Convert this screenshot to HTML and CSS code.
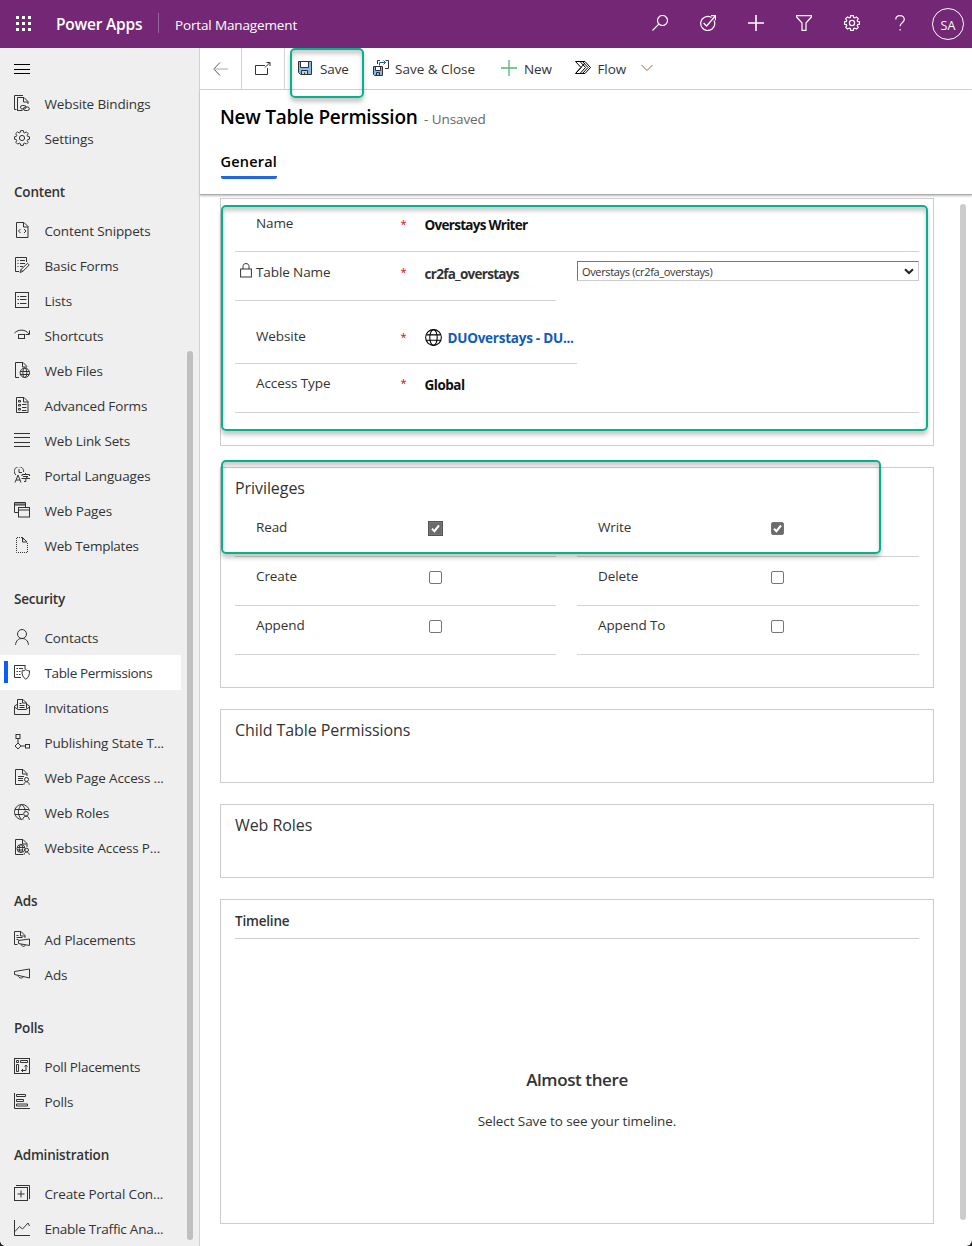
FILE: index.html
```html
<!DOCTYPE html>
<html lang="en">
<head>
<meta charset="utf-8">
<title>New Table Permission</title>
<link rel="stylesheet" href="styles.css">
</head>
<body>
<div class="app">
  <header class="topbar">
    <svg class="waffle" viewBox="0 0 16 16"><path d="M0 0h3v3H0zM6 0h3v3H6zM12 0h3v3h-3zM0 6h3v3H0zM6 6h3v3H6zM12 6h3v3h-3zM0 12h3v3H0zM6 12h3v3H6zM12 12h3v3h-3z"/></svg>
    <span class="brand">Power Apps</span>
    <span class="brand-sep"></span>
    <span class="app-name">Portal Management</span>
    <nav class="top-actions">
      <svg class="ti" viewBox="0 0 16 16"><circle cx="10.5" cy="5.5" r="5"/><path d="M6.8 9.2.5 15.5"/></svg>
      <svg class="ti" viewBox="0 0 16 16"><path d="M11.5 2.6A7 7 0 1 0 14 5.4M3.6 8l3 3L15.3 1M11 .6h4.5v4.6"/></svg>
      <svg class="ti plus" viewBox="0 0 16 16"><path d="M8 0v16M0 8h16"/></svg>
      <svg class="ti" viewBox="0 0 16 16"><path d="M.6.7h14.8v1.2L10 8v7.4H6V8L.6 1.9z"/></svg>
      <svg class="ti" viewBox="0 0 16 16"><path d="m6.6.6-.4 1.9-1 .4-1.7-1-1.8 1.8 1 1.7-.4 1-1.8.4v2.4l1.9.4.4 1-1 1.7 1.8 1.8 1.7-1 1 .4.4 1.9h2.6l.4-1.9 1-.4 1.7 1 1.8-1.8-1-1.7.4-1 1.9-.4V6.8l-1.9-.4-.4-1 1-1.7-1.8-1.8-1.7 1-1-.4L9.3.6z"/><circle cx="8" cy="8" r="2.6"/></svg>
      <svg class="ti" viewBox="0 0 16 16"><path d="M3.8 4.5C3.8 2 5.5.6 8 .6s4.300 1.400 4.300 3.800c0 3.100-4.200 3.600-4.200 6.800M8.100 14v1.600"/></svg>
      <span class="avatar">SA</span>
    </nav>
  </header>

  <div class="body">
    <aside class="sidebar">
      <div class="menu"><svg class="ni burger" viewBox="0 0 16 16"><path d="M0 3.500h16M0 8.500h16M0 12.500h16"/></svg></div>
      <a class="item"><svg class="ni" viewBox="0 0 16 16"><path d="M2.500 14.500h-2V.5H9M3.500 15.500h5M5 15.500H3.500v-13H10l4 4v2.500M9.500 2.500V7H14"/><rect x="6.500" y="10.500" width="5.500" height="3.500" rx="1.700"/><rect x="9.500" y="12" width="5.800" height="3.500" rx="1.700"/></svg>Website Bindings</a>
      <a class="item"><svg class="ni" viewBox="0 0 16 16"><path d="m6.600.6-.4 1.900-1 .4-1.700-1-1.800 1.800 1 1.700-.4 1-1.800.4v2.400l1.900.4.4 1-1 1.700 1.800 1.800 1.700-1 1 .4.4 1.900h2.600l.4-1.900 1-.4 1.700 1 1.800-1.800-1-1.700.4-1 1.900-.4V6.800l-1.900-.4-.4-1 1-1.700-1.800-1.800-1.700 1-1-.4L9.300.6z"/><circle cx="8" cy="8" r="2.600"/></svg>Settings</a>

      <h2 class="group">Content</h2>
      <a class="item"><svg class="ni" viewBox="0 0 16 16"><path d="M2.500.5H10l4 4v11H2.500zM9.500.5V5H14M6.500 7l-2 2 2 2M10 7l2 2-2 2"/></svg>Content Snippets</a>
      <a class="item"><svg class="ni" viewBox="0 0 16 16"><path d="M5 14.500H1.500V.5h11V5M3.500 3.500h1M6 3.500h5M3.500 6.500h1M6 6.500h5M3.500 9.500h1M6 9.500h3"/><path d="m6 15.500 1-3 6.500-6.200 1.700 1.700-6.400 6.400zM7 12.500l1.800 1.800"/></svg>Basic Forms</a>
      <a class="item"><svg class="ni" viewBox="0 0 16 16"><rect x="1.500" y=".5" width="13" height="15"/><path d="M3.500 4.500H5M6 4.500h6.500M3.500 7.500H5M6 7.500h6.500M3.500 11.500H5M6 11.500h6.500"/></svg>Lists</a>
      <a class="item"><svg class="ni" viewBox="0 0 16 16"><path d="M.5 6c4-4 11-4 14.500 1M15.500 3.500v4h-4"/><rect x="4.500" y="7.500" width="6" height="4"/></svg>Shortcuts</a>
      <a class="item"><svg class="ni" viewBox="0 0 16 16"><path d="M5 15.500H1.500V.5H9l4 4M8.500.5V5H13"/><circle cx="10.800" cy="10.800" r="4.700"/><ellipse cx="10.800" cy="10.800" rx="2" ry="4.700"/><path d="M6.200 9.500h9M6.200 12.500h9"/></svg>Web Files</a>
      <a class="item"><svg class="ni" viewBox="0 0 16 16"><path d="M2.500.5H10l4 4v11H2.500zM9.500.5V5H14M8 7.500h4.500M8 10.500h4.500M8 13.500h4.500"/><path d="M4.500 3.500h2v1.500h-2zM4.500 7.500h2v1.500h-2zM4.500 11.500h2V13h-2z"/></svg>Advanced Forms</a>
      <a class="item"><svg class="ni" viewBox="0 0 16 16"><path d="M0 1.500h16M0 5.500h16M0 10.500h16M0 14.500h16"/></svg>Web Link Sets</a>
      <a class="item"><svg class="ni" viewBox="0 0 16 16"><path d="M2 8A4.700 4.700 0 1 1 9.600 5M5 2v3.500h3M1 15.500l3-7.500 3 7.500M2 13h4M8 9V7.500h7.500V9M11.500 6v1.500M9 9.500h5l-2.200 1.800v3.200H10M7.500 11.500H16"/></svg>Portal Languages</a>
      <a class="item"><svg class="ni" viewBox="0 0 16 16"><path d="M4 10.500H.5V.5h11V5M.5 2h11M.5 3h11"/><rect x="4.500" y="5.500" width="11" height="9.500"/><path d="M4.500 8h11"/></svg>Web Pages</a>
      <a class="item tight"><svg class="ni" viewBox="0 0 16 16"><path stroke-dasharray="1 1" d="M8 .5H2.500v15h11V6"/><path d="M8.500.5V5H13L8.500.5l2 2.500"/></svg>Web Templates</a>

      <h2 class="group">Security</h2>
      <a class="item"><svg class="ni" viewBox="0 0 16 16"><circle cx="8" cy="5" r="4.500"/><path d="M1.500 15.800C2 11.500 4.500 9.500 8 9.500s6 2 6.500 6.300"/></svg>Contacts</a>
      <a class="item selected"><svg class="ni" viewBox="0 0 16 16"><path d="M7 13.500H.5V1.500H11V5M2.500 4.500H4M5 4.500h4M2.500 7.500H4M5 7.500h1.500M2.500 10.500H4M5 10.500h1.500M.5 1.500h11"/><path d="M11.800 5.500c1 1 2.300 1.300 3.700 1.300 0 4-.7 6.700-3.700 8.400-3-1.700-3.800-4.400-3.800-8.400 1.500 0 2.800-.3 3.800-1.300z"/></svg>Table Permissions</a>
      <a class="item"><svg class="ni" viewBox="0 0 16 16"><path d="M3 5.500.5 7v8.500h15V7L13 5.500M.5 8 4 10.500h8L15.500 8M3.500 9.500v-9H9l3.500 3.500v5.500M8.500.5V4h4M5.500 4.500h2M5.500 6.500h5M5.500 8.500h5"/></svg>Invitations</a>
      <a class="item"><svg class="ni" viewBox="0 0 16 16"><rect x="2" y=".5" width="4" height="4"/><path d="M4 4.500V9M6.500 12h5M4 9l3 3-3 3-3-3z"/><rect x="11.500" y="10.500" width="4" height="3.500"/></svg>Publishing State T...</a>
      <a class="item"><svg class="ni" viewBox="0 0 16 16"><path d="M9 15.500H1.500V.5H9l4 4V7M8.500.5V5H13M4 7.500h6M4 9.500h5M4 11.500h5"/><circle cx="12.500" cy="10.500" r="2"/><path d="M9.800 15.800c.2-4 5.200-4 5.500 0"/></svg>Web Page Access ...</a>
      <a class="item"><svg class="ni" viewBox="0 0 16 16"><path d="M8 15.500A7.500 7.500 0 1 1 15.400 7M7 15c-4-5-3-11 .5-14.300M8 .7c2 1.700 3 4 3.200 6M1 5.500h14M1 10.500h8"/><circle cx="12" cy="9.800" r="2.300"/><path d="M8.800 15.800c.2-4.800 6.300-4.800 6.500 0"/></svg>Web Roles</a>
      <a class="item"><svg class="ni" viewBox="0 0 16 16"><path d="M9 15.500H1.500V.5H9l4 4V8M8.500.5V5H13"/><circle cx="7" cy="9.500" r="4"/><ellipse cx="7" cy="9.500" rx="1.700" ry="4"/><path d="M3 8.500h8M3 11h6"/><circle cx="12.700" cy="11" r="1.800"/><path d="M10 15.800c.2-3.600 5-3.600 5.300 0"/></svg>Website Access P...</a>

      <h2 class="group">Ads</h2>
      <a class="item"><svg class="ni" viewBox="0 0 16 16"><path d="M3.500 13.500h-3V.5H7l4 4V7M6.500.5V5H11M2.500 4.500h2M2.500 6.500h6M2.500 8.500h2"/><path d="M4.500 9.500 15.500 8v6.500L4.500 12.500zM7 13c.5 3 4 3 4.500.8"/></svg>Ad Placements</a>
      <a class="item"><svg class="ni" viewBox="0 0 16 16"><path d="M.5 5.500 15.500 3v9L.5 8.500zM4 9.500c.5 3.200 5 3.200 5.500 1"/></svg>Ads</a>

      <h2 class="group">Polls</h2>
      <a class="item tight"><svg class="ni" viewBox="0 0 16 16"><rect x=".5" y=".5" width="15" height="15"/><path d="M2.500 2.500h2V4.500h-2zM6.500 2.500h7V4.500h-7zM2.500 6.500h2v7h-2zM12 7v5.500H7.500M10.500 8.500 12 7l1.500 1.500M9 11l-1.500 1.500L9 14"/></svg>Poll Placements</a>
      <a class="item"><svg class="ni" viewBox="0 0 16 16"><path d="M.5 0v15.500H16M2.500 1.500h9v2h-9zM2.500 6.500h7v2h-7zM2.500 11h11v2h-11z"/></svg>Polls</a>

      <h2 class="group">Administration</h2>
      <a class="item"><svg class="ni" viewBox="0 0 16 16"><rect x=".5" y="2.500" width="13" height="13"/><path d="M2 .5h13.500V14M7 5.500v7M3.500 9h7"/></svg>Create Portal Con...</a>
      <a class="item tight"><svg class="ni" viewBox="0 0 16 16"><path d="M.5 0v15.500H16M1 11.500l4.500-5 3 2.500L14 3l1.500 3"/></svg>Enable Traffic Ana...</a>
      <div class="side-scroll"></div>
    </aside>

    <main class="main">
      <div class="commands">
        <span class="cmd-icon back"><svg class="ci" viewBox="0 0 16 16"><path d="M7 1.500.8 8 7 14.500"/><path class="shaft" d="M1 8h14"/></svg></span>
        <span class="cmd-icon pop"><svg class="ci" viewBox="0 0 16 16"><path d="M10 4.500H.5v9h12V7M10 6.500l5-5M11.500 1.500H15V5"/></svg></span>
        <span class="cmd save"><svg class="ci" viewBox="0 0 16 16"><path fill="#83bce9" stroke="none" d="M1 1h13v13H3l-2-2z"/><path fill="#fff" class="dk" d="M3.500 1.500h8v6h-8z"/><path fill="#d0d0d0" class="dk" d="M4.500 10.500h6v4h-6zM7.500 12.500v2"/><path class="dk" d="M1.500 1.500h13v13h-11l-2-2z"/></svg>Save</span>
        <span class="cmd saveclose"><svg class="ci" viewBox="0 0 16 16"><path fill="#83bce9" stroke="none" d="M1 7h9v8H1z"/><path fill="#fff" stroke="none" d="M3 7h5v3H3z"/><path class="dk" d="M.5 6.500h9v9h-8l-1-1zM2.500 6.500v4h5v-4M3.500 15.500v-3h3v3M4.500 4V.5H7M12.500.5h3v8H12"/><path class="bl" d="M6.500 5.500v-3h6M10.500.5l2 2-2 2"/></svg>Save &amp; Close</span>
        <span class="cmd new"><svg class="ci green" viewBox="0 0 16 16"><path d="M8 0v16M0 8h16"/></svg>New</span>
        <span class="cmd flow"><svg class="ci blk" viewBox="0 0 16 16"><path d="M.5 1.500h9.500L15.500 7.500 10 13.500H.5L6 7.500zM5 1.500l5.500 6M10.500 7.500l-5.500 6M1 13 10 3M7.500 1.500l5.500 6-5.500 6"/></svg>Flow</span>
        <svg class="chev" viewBox="0 0 12 8"><path d="M.5 1 6 6.500 11.500 1"/></svg>
        <div class="mark mark-save"></div>
      </div>
      <div class="head">
        <div class="title-row"><h1>New Table Permission</h1><span class="unsaved">- Unsaved</span></div>
        <span class="tab">General</span>
      </div>

      <div class="content">
        <section class="card first">
          <div class="row r-name"><span class="label">Name</span><span class="req">*</span><span class="val">Overstays Writer</span></div>
          <div class="pair">
            <div class="row r-table"><svg class="lock" viewBox="0 0 12 15"><rect x=".6" y="6" width="10.800" height="8"/><path d="M3 6V3.500C3 1.500 4.200.6 6 .6s3 .9 3 2.900V6"/></svg><span class="label">Table Name</span><span class="req">*</span><span class="val soft">cr2fa_overstays</span></div>
            <div class="select"><span>Overstays (cr2fa_overstays)</span><svg viewBox="0 0 10 7"><path d="M1 1.200 5 5 9 1.200"/></svg></div>
          </div>
          <div class="row r-site"><span class="label">Website</span><span class="req">*</span><span class="val link"><svg viewBox="0 0 16 16"><circle cx="8" cy="8" r="7.400"/><ellipse cx="8" cy="8" rx="3.500" ry="7.400"/><path d="M1.200 5.500h13.600M1.200 10.500h13.600"/></svg>DUOverstays - DU...</span></div>
          <div class="row r-access"><span class="label">Access Type</span><span class="req">*</span><span class="val">Global</span></div>
          <div class="mark mark-form"></div>
        </section>

        <section class="card privileges">
          <h3>Privileges</h3>
          <div class="grid">
            <div class="row"><span class="label">Read</span><span class="check on focus"><svg viewBox="0 0 13 13"><path d="m3 6.800 2.400 2.400L10 3.500"/></svg></span></div>
            <div class="row"><span class="label">Write</span><span class="check on"><svg viewBox="0 0 13 13"><path d="m3 6.800 2.400 2.400L10 3.500"/></svg></span></div>
            <div class="row"><span class="label">Create</span><span class="check"></span></div>
            <div class="row"><span class="label">Delete</span><span class="check"></span></div>
            <div class="row"><span class="label">Append</span><span class="check"></span></div>
            <div class="row"><span class="label">Append To</span><span class="check"></span></div>
          </div>
          <div class="mark mark-priv"></div>
        </section>

        <section class="card short"><h3>Child Table Permissions</h3></section>
        <section class="card short"><h3>Web Roles</h3></section>

        <section class="card timeline">
          <h4>Timeline</h4>
          <div class="almost">Almost there</div>
          <p>Select Save to see your timeline.</p>
        </section>
        <div class="main-scroll"></div>
      </div>
    </main>
  </div>
</div>
</body>
</html>
```
FILE: styles.css
```css
* { box-sizing: border-box; }
body { margin: 0; background: #222; font-family: "Open Sans", "Noto Sans", sans-serif; font-size: 13.5px; color: #333; }
h1, h2, h3, h4, p { margin: 0; }
svg { display: block; flex: none; fill: none; stroke: currentColor; stroke-width: 1; }
.app { width: 972px; height: 1246px; overflow: hidden; background: #fff; border-radius: 0 0 6px 6px; display: flex; flex-direction: column; }

.topbar { height: 48px; flex: none; background: #742774; color: #fff; display: flex; align-items: center; padding-left: 16px; white-space: nowrap; }
.waffle { width: 16px; height: 16px; fill: #fff; stroke: none; }
.brand { width: 102px; margin-left: 24px; font-size: 15.5px; font-weight: 600; letter-spacing: -.2px; }
.brand-sep { width: 1px; height: 20px; margin-top: -2px; background: #9a629a; }
.app-name { margin: 2px 0 0 16px; letter-spacing: -.14px; }
.top-actions { margin-left: auto; display: flex; align-items: center; gap: 32px; padding-right: 8px; }
.ti { width: 16px; height: 16px; stroke-width: 1.2; margin-top: -3px; }
.plus { stroke-width: 1.6; }
.avatar { width: 32px; height: 32px; margin-left: -8px; border: 1px solid #fff; border-radius: 50%; text-align: center; font-size: 12.5px; line-height: 33px; }

.body { flex: 1; display: flex; min-height: 0; }
.sidebar { position: relative; width: 200px; flex: none; background: #efefef; border-right: 1px solid #d2d2d2; }
.menu { height: 38px; padding: 13px 0 0 14px; }
.burger { color: #000; }
.ni { width: 16px; height: 16px; margin-right: 14.5px; }
.item { display: flex; align-items: center; height: 35px; width: 181px; padding-left: 14px; letter-spacing: -.14px; white-space: nowrap; }
.item .ni { margin-top: -1px; }
.tight { letter-spacing: -.24px; }
.selected { letter-spacing: -.36px; background: linear-gradient(#0b5cff, #0b5cff) 4px 6px / 4px 22px no-repeat #fff; }
.group { height: 57px; padding: 26px 0 0 14px; font-size: 13.5px; line-height: 20px; font-weight: 600; letter-spacing: -.2px; }
.side-scroll { position: absolute; left: 187px; top: 303px; width: 6px; height: 889px; border-radius: 3px; background: #bfbfbf; }

.main { flex: 1; display: flex; flex-direction: column; min-width: 0; }
.commands { position: relative; height: 42px; flex: none; border-bottom: 1px solid #d2d2d2; display: flex; align-items: center; white-space: nowrap; }
.cmd-icon { height: 41px; display: flex; align-items: center; border-right: 1px solid #d2d2d2; }
.back { width: 42px; padding-left: 13px; }
.pop { width: 43px; padding-left: 13px; }
.ci { width: 16px; height: 16px; }
.back .ci { stroke: #555; }
.back .shaft { stroke: #aaa; }
.cmd { display: flex; align-items: center; gap: 7px; letter-spacing: -.1px; }
.cmd .ci { margin-top: -2px; }
.dk { stroke: #333; }
.bl { stroke: #1267b4; }
.save { margin-left: 12px; width: 76px; }
.saveclose { width: 128px; gap: 6px; letter-spacing: 0; }
.new { width: 73.5px; }
.green { stroke: #52b877; stroke-width: 1.3; }
.flow { width: 66.5px; }
.blk { stroke: #000; }
.chev { width: 12px; height: 8px; stroke: #a0673a; margin-top: -2px; }

.head { height: 105px; flex: none; padding: 13px 0 0 20px; border-bottom: 1px solid #acacac; box-shadow: 0 1px 2px #bbb; z-index: 1; }
.title-row { display: flex; align-items: baseline; line-height: 28px; height: 28px; }
h1 { font-size: 19px; font-weight: 600; color: #000; letter-spacing: -.26px; width: 204px; white-space: nowrap; }
.unsaved { color: #666; letter-spacing: -.08px; }
.tab { display: inline-block; margin: 19px 0 0 .5px; height: 29px; line-height: 24px; font-size: 14.500px; font-weight: 600; letter-spacing: .2px; color: #000; border-bottom: 3px solid #2266e3; border-radius: 2px; }

.content { position: relative; flex: 1; padding: 3px 38px 0 20px; display: flex; flex-direction: column; gap: 21px; }
.card { position: relative; border: 1px solid #ccc; padding: 0 14px; }
.first { height: 248px; }
.row { position: relative; display: flex; align-items: center; border-bottom: 1px solid #d2d2d2; padding-left: 21px; }
.label { width: 144.5px; flex: none; white-space: nowrap; letter-spacing: -.1px; }
.req { width: 24px; flex: none; color: #d00; font-size: 11px; }
.val { font-weight: 700; color: #111; letter-spacing: -.72px; white-space: nowrap; padding-top: 4px; }
.r-access .val { letter-spacing: -.5px; }
.soft { color: #333; }
.val.link { display: flex; align-items: center; gap: 6px; color: #115bb8; letter-spacing: -.25px; padding-top: 3px; }
.link svg { width: 17px; height: 17px; stroke: #000; stroke-width: 1; }
.r-name { height: 53px; padding-bottom: 4px; }
.pair { display: flex; gap: 21px; }
.r-table { width: 321px; height: 49px; padding-bottom: 9px; }
.lock { position: absolute; left: 5px; top: 11px; width: 12px; height: 15px; }
.r-site { width: 342px; height: 63px; padding-top: 8px; }
.r-access { height: 49px; padding-bottom: 11px; }
.select { width: 342px; height: 20px; margin-top: 9px; border: 1px solid; border-color: #767676 #ccc #ccc #767676; display: flex; align-items: center; justify-content: space-between; padding: 1px 4px 0; font-size: 11px; letter-spacing: -.34px; }
.select svg { width: 10px; height: 7px; stroke: #222; stroke-width: 2; }

h3 { font-size: 16px; font-weight: 400; line-height: 24px; letter-spacing: -.07px; }
.privileges { height: 221px; padding-top: 8px; }
.grid { display: grid; grid-template-columns: 321px 342px; column-gap: 21px; grid-auto-rows: 49px; padding-top: 8px; }
.grid .row { padding-bottom: 11px; }
.grid .label { width: 173px; }
.check { width: 13px; height: 13px; margin-top: 3px; border: 1px solid #767676; border-radius: 2px; }
.on { background: #6b6b6b; }
.on svg { width: 13px; height: 13px; margin: -1px; stroke: #fff; stroke-width: 2; }
.focus { outline: 1px solid #555; border-radius: 0; }
.short { height: 74px; padding-top: 8px; }
.timeline { height: 325px; }
h4 { font-size: 13.500px; font-weight: 600; line-height: 20px; height: 39px; padding-top: 11px; border-bottom: 1px solid #ccc; letter-spacing: -.2px; }
.almost { margin-top: 128px; text-align: center; font-size: 17px; font-weight: 600; line-height: 26px; letter-spacing: -.4px; }
.timeline p { margin-top: 18px; text-align: center; line-height: 20px; letter-spacing: -.1px; }
.main-scroll { position: absolute; left: 760px; top: 9px; width: 6px; height: 1016px; border-radius: 3px; background: #ccc; }

.mark { position: absolute; border: 2px solid #09b08d; border-radius: 5px; box-shadow: 0 4px 4px rgba(0, 0, 0, .22), inset 0 4px 4px rgba(0, 0, 0, .2); }
.mark-save { left: 90px; top: 0; width: 74px; height: 50px; z-index: 2; }
.mark-form { left: 0; top: 6px; width: 707px; height: 226px; }
.mark-priv { left: 0; top: -8px; width: 660px; height: 94px; }
```
